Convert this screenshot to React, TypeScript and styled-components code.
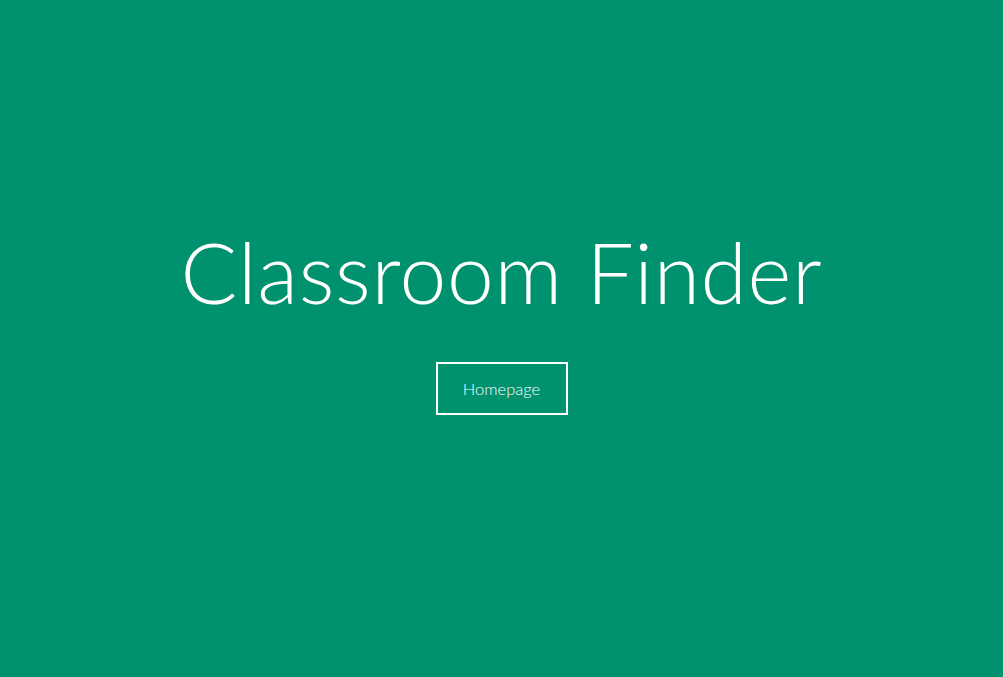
import React from "react";
import styled, { createGlobalStyle } from "styled-components";

const Global = createGlobalStyle`
  html, body { margin: 0; padding: 0; background: #00916e; }
  body { font-family: "Lato", "Open Sans", sans-serif; }
`;

const Hero = styled.main`
  height: 677px;
  display: flex;
  flex-direction: column;
  align-items: center;
  justify-content: center;
  background: #00916e;
  color: #fff;
  box-sizing: border-box;
  padding-bottom: 32px;
`;

const Title = styled.h1`
  margin: 0 0 48px;
  font-family: "Lato", sans-serif;
  font-weight: 300;
  font-size: 84px;
  line-height: 1;
  letter-spacing: 0.7px;
`;

const Button = styled.a`
  display: flex;
  align-items: center;
  justify-content: center;
  width: 132px;
  height: 53px;
  box-sizing: border-box;
  border: 2px solid #fff;
  color: #fff;
  font-family: "Lato", sans-serif;
  font-weight: 300;
  font-size: 16.5px;
  text-decoration: none;
`;

export default function App() {
  return (
    <>
      <Global />
      <Hero>
        <Title>Classroom Finder</Title>
        <Button href="#">Homepage</Button>
      </Hero>
    </>
  );
}
